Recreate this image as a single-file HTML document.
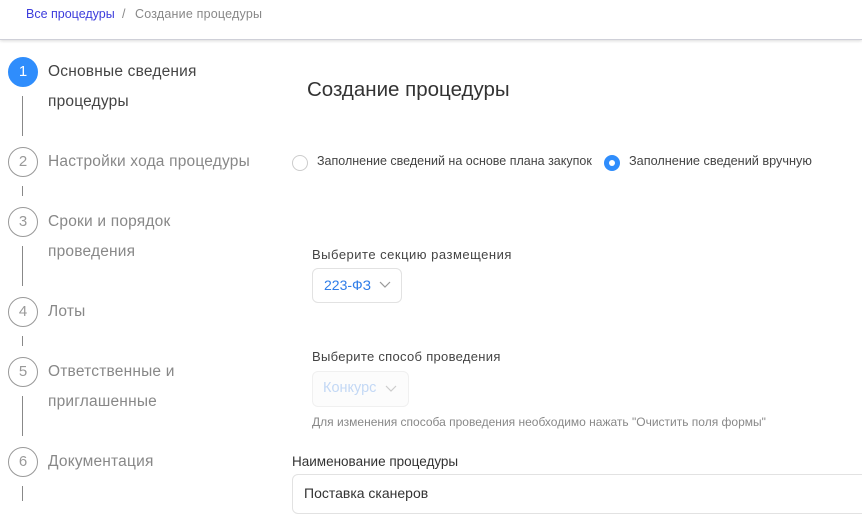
<!DOCTYPE html>
<html><head><meta charset="utf-8"><style>
*{margin:0;padding:0;box-sizing:border-box}
body{width:862px;height:501px;overflow:hidden;background:#fff;font-family:"Liberation Sans",sans-serif;position:relative;color:#333}
.a{position:absolute;white-space:nowrap}
.hdr{position:absolute;left:0;top:0;width:862px;height:40px;background:#fff;border-bottom:1px solid #cfd0d8;box-shadow:0 1px 3px rgba(0,0,0,.15)}
.c{position:absolute;left:8px;width:30px;height:30px;border-radius:50%;border:1px solid #999;color:#999;font-size:15px;text-align:center;line-height:28px}
.c.on{background:#2f8dfc;border-color:#2f8dfc;color:#fff}
.l{position:absolute;left:22px;width:1px;background:#888}
.s{position:absolute;left:48px;font-size:15.5px;letter-spacing:.2px;line-height:30px;color:#888}
.box{position:absolute;border:1px solid #e2e2e2;border-radius:6px}
</style></head><body>
<div class="hdr"></div>
<div class="a" style="left:26px;top:7px;font-size:12.5px;color:#3c3cdc">Все процедуры</div>
<div class="a" style="left:122px;top:7px;font-size:12.5px;color:#888">/</div>
<div class="a" style="left:135px;top:7px;font-size:12.5px;letter-spacing:.2px;color:#888">Создание процедуры</div>

<div class="c on" style="top:57px">1</div>
<div class="s" style="top:57px;color:#444">Основные сведения<br>процедуры</div>
<div class="l" style="top:96px;height:40px"></div>
<div class="c" style="top:147px">2</div>
<div class="s" style="top:147px">Настройки хода процедуры</div>
<div class="l" style="top:186px;height:10px"></div>
<div class="c" style="top:207px">3</div>
<div class="s" style="top:207px">Сроки и порядок<br>проведения</div>
<div class="l" style="top:246px;height:40px"></div>
<div class="c" style="top:297px">4</div>
<div class="s" style="top:297px">Лоты</div>
<div class="l" style="top:336px;height:10px"></div>
<div class="c" style="top:357px">5</div>
<div class="s" style="top:357px">Ответственные и<br>приглашенные</div>
<div class="l" style="top:396px;height:40px"></div>
<div class="c" style="top:447px">6</div>
<div class="s" style="top:447px">Документация</div>
<div class="l" style="top:486px;height:15px"></div>

<div class="a" style="left:307px;top:78px;font-size:20.5px;color:#333">Создание процедуры</div>

<div class="a" style="left:292px;top:155px;width:16px;height:16px;border:1px solid #ccc;border-radius:50%"></div>
<div class="a" style="left:317px;top:154px;font-size:12.5px;color:#444">Заполнение сведений на основе плана закупок</div>
<div class="a" style="left:604px;top:155px;width:16px;height:16px;border-radius:50%;background:#2f8dfc"><div style="position:absolute;left:5px;top:5px;width:6px;height:6px;border-radius:50%;background:#fff"></div></div>
<div class="a" style="left:629px;top:154px;font-size:12.7px;color:#444">Заполнение сведений вручную</div>

<div class="a" style="left:312px;top:247px;font-size:13px;letter-spacing:.5px;color:#444">Выберите секцию размещения</div>
<div class="box" style="left:312px;top:268px;width:90px;height:35px"></div>
<div class="a" style="left:324px;top:277px;font-size:14px;color:#2f7de8">223-ФЗ</div>
<svg class="a" style="left:379px;top:281px" width="12" height="8"><path d="M1 1l5 5 5-5" fill="none" stroke="#999" stroke-width="1.2"/></svg>

<div class="a" style="left:312px;top:349px;font-size:13px;letter-spacing:.3px;color:#444">Выберите способ проведения</div>
<div class="box" style="left:312px;top:371px;width:97px;height:36px;border-color:#f0f0f0;background:#fcfcfc"></div>
<div class="a" style="left:323px;top:380px;font-size:14.5px;color:#c3d8f5">Конкурс</div>
<svg class="a" style="left:385px;top:385px" width="12" height="8"><path d="M1 1l5 5 5-5" fill="none" stroke="#ccc" stroke-width="1.2"/></svg>
<div class="a" style="left:312px;top:415px;font-size:12px;color:#888">Для изменения способа проведения необходимо нажать "Очистить поля формы"</div>

<div class="a" style="left:292px;top:454px;font-size:13.5px;color:#333">Наименование процедуры</div>
<div class="box" style="left:292px;top:474px;width:600px;height:40px"></div>
<div class="a" style="left:304px;top:485px;font-size:14px;color:#333">Поставка сканеров</div>
</body></html>
